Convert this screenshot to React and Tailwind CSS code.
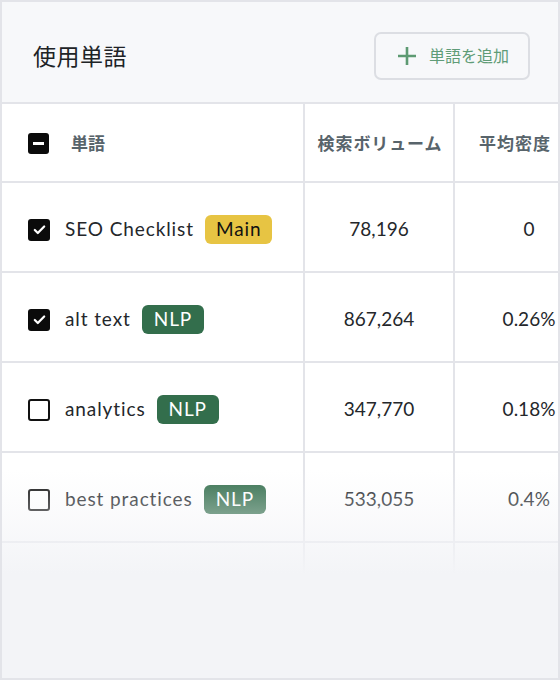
import React from "react";

const rows = [
  { word: "SEO Checklist", tag: "Main", checked: true, volume: "78,196", density: "0" },
  { word: "alt text", tag: "NLP", checked: true, volume: "867,264", density: "0.26%" },
  { word: "analytics", tag: "NLP", checked: false, volume: "347,770", density: "0.18%" },
  { word: "best practices", tag: "NLP", checked: false, volume: "533,055", density: "0.4%" },
  { word: "", tag: null, checked: null, volume: "", density: "" },
];

function Checkbox({ state }) {
  if (state === "some") {
    return (
      <div className="w-[21px] h-[21px] rounded-[3px] bg-[#0b0b0b] flex items-center justify-center">
        <div className="w-[11px] h-[3px] bg-white" />
      </div>
    );
  }
  if (state) {
    return (
      <div className="w-[22px] h-[22px] rounded-[3px] bg-[#0b0b0b] flex items-center justify-center">
        <svg width="15" height="15" viewBox="0 0 16 16" fill="none">
          <path d="M3 8.5l3.2 3.2L13 4.8" stroke="white" strokeWidth="2.4" strokeLinecap="round" strokeLinejoin="round" />
        </svg>
      </div>
    );
  }
  return <div className="w-[22px] h-[22px] rounded-[3px] border-2 border-[#111]" />;
}

function Tag({ label }) {
  const main = label === "Main";
  return (
    <span
      className={
        main
          ? "h-[29px] px-[11px] rounded-[6px] bg-[#e7c443] text-[#111] flex items-center text-[19px] tracking-[0.9px]"
          : "h-[29px] px-[12px] rounded-[6px] bg-[#336e4c] text-white flex items-center text-[19px] tracking-[0.9px]"
      }
    >
      {label}
    </span>
  );
}

export default function App() {
  return (
    <div
      className="w-[560px] h-[680px] bg-[#e3e4e9] p-[2px]"
      style={{ fontFamily: "Lato, 'Noto Sans CJK JP', sans-serif" }}
    >
      <div className="relative w-full h-full overflow-hidden bg-[#f3f4f7]">
        <div className="h-[100px] bg-[#f7f8fa] flex items-center justify-between pl-[31px] pr-[28px] pt-[8px]">
          <h1 className="text-[23px] text-[#202326] font-normal tracking-[0.5px]">使用単語</h1>
          <button className="w-[156px] h-[48px] rounded-[7px] border-2 border-[#dcdee3] bg-[#f7f8fa] flex items-center justify-center gap-[12px] pl-[2px]">
            <svg width="20" height="20" viewBox="0 0 20 20">
              <path d="M10 1v18M1 10h18" stroke="#5d9a72" strokeWidth="2.6" />
            </svg>
            <span className="text-[16px] text-[#5f9c77]">単語を追加</span>
          </button>
        </div>

        <div className="grid grid-cols-[301px_148px_148px] gap-[2px] bg-[#e3e4e9] pt-[2px]">
          <div className="h-[77px] bg-white flex items-center pl-[26px] gap-[22px] pt-[2px]">
            <Checkbox state="some" />
            <span className="text-[17px] font-semibold text-[#58646b]">単語</span>
          </div>
          <div className="h-[77px] bg-white flex items-center justify-center pt-[2px]">
            <span className="text-[17px] font-semibold text-[#58646b] tracking-[0.9px] pl-[2px]">検索ボリューム</span>
          </div>
          <div className="h-[77px] bg-white flex items-center pl-[24px] pt-[2px]">
            <span className="text-[17px] font-semibold text-[#58646b] tracking-[1px]">平均密度</span>
          </div>

          {rows.map((r, i) => (
            <React.Fragment key={i}>
              <div className="h-[88px] bg-white flex items-center pl-[26px] pt-[5px]">
                {r.checked !== null && (
                  <>
                    <Checkbox state={r.checked} />
                    <span className="ml-[15px] text-[19px] text-[#24272b] tracking-[0.9px]">{r.word}</span>
                    <span className="ml-[11px]">
                      <Tag label={r.tag} />
                    </span>
                  </>
                )}
              </div>
              <div className="h-[88px] bg-white flex items-center justify-center text-[19px] text-[#24272b] pt-[5px]">
                {r.volume}
              </div>
              <div className="h-[88px] bg-white flex items-center justify-center text-[19px] text-[#24272b] pt-[5px]">
                {r.density}
              </div>
            </React.Fragment>
          ))}
        </div>

        <div className="absolute inset-x-0 top-[468px] h-[104px] bg-gradient-to-b from-[#f3f4f7]/0 via-[#f3f4f7]/45 to-[#f3f4f7]" />
        <div className="absolute inset-x-0 top-[572px] bottom-0 bg-[#f3f4f7]" />
      </div>
    </div>
  );
}
